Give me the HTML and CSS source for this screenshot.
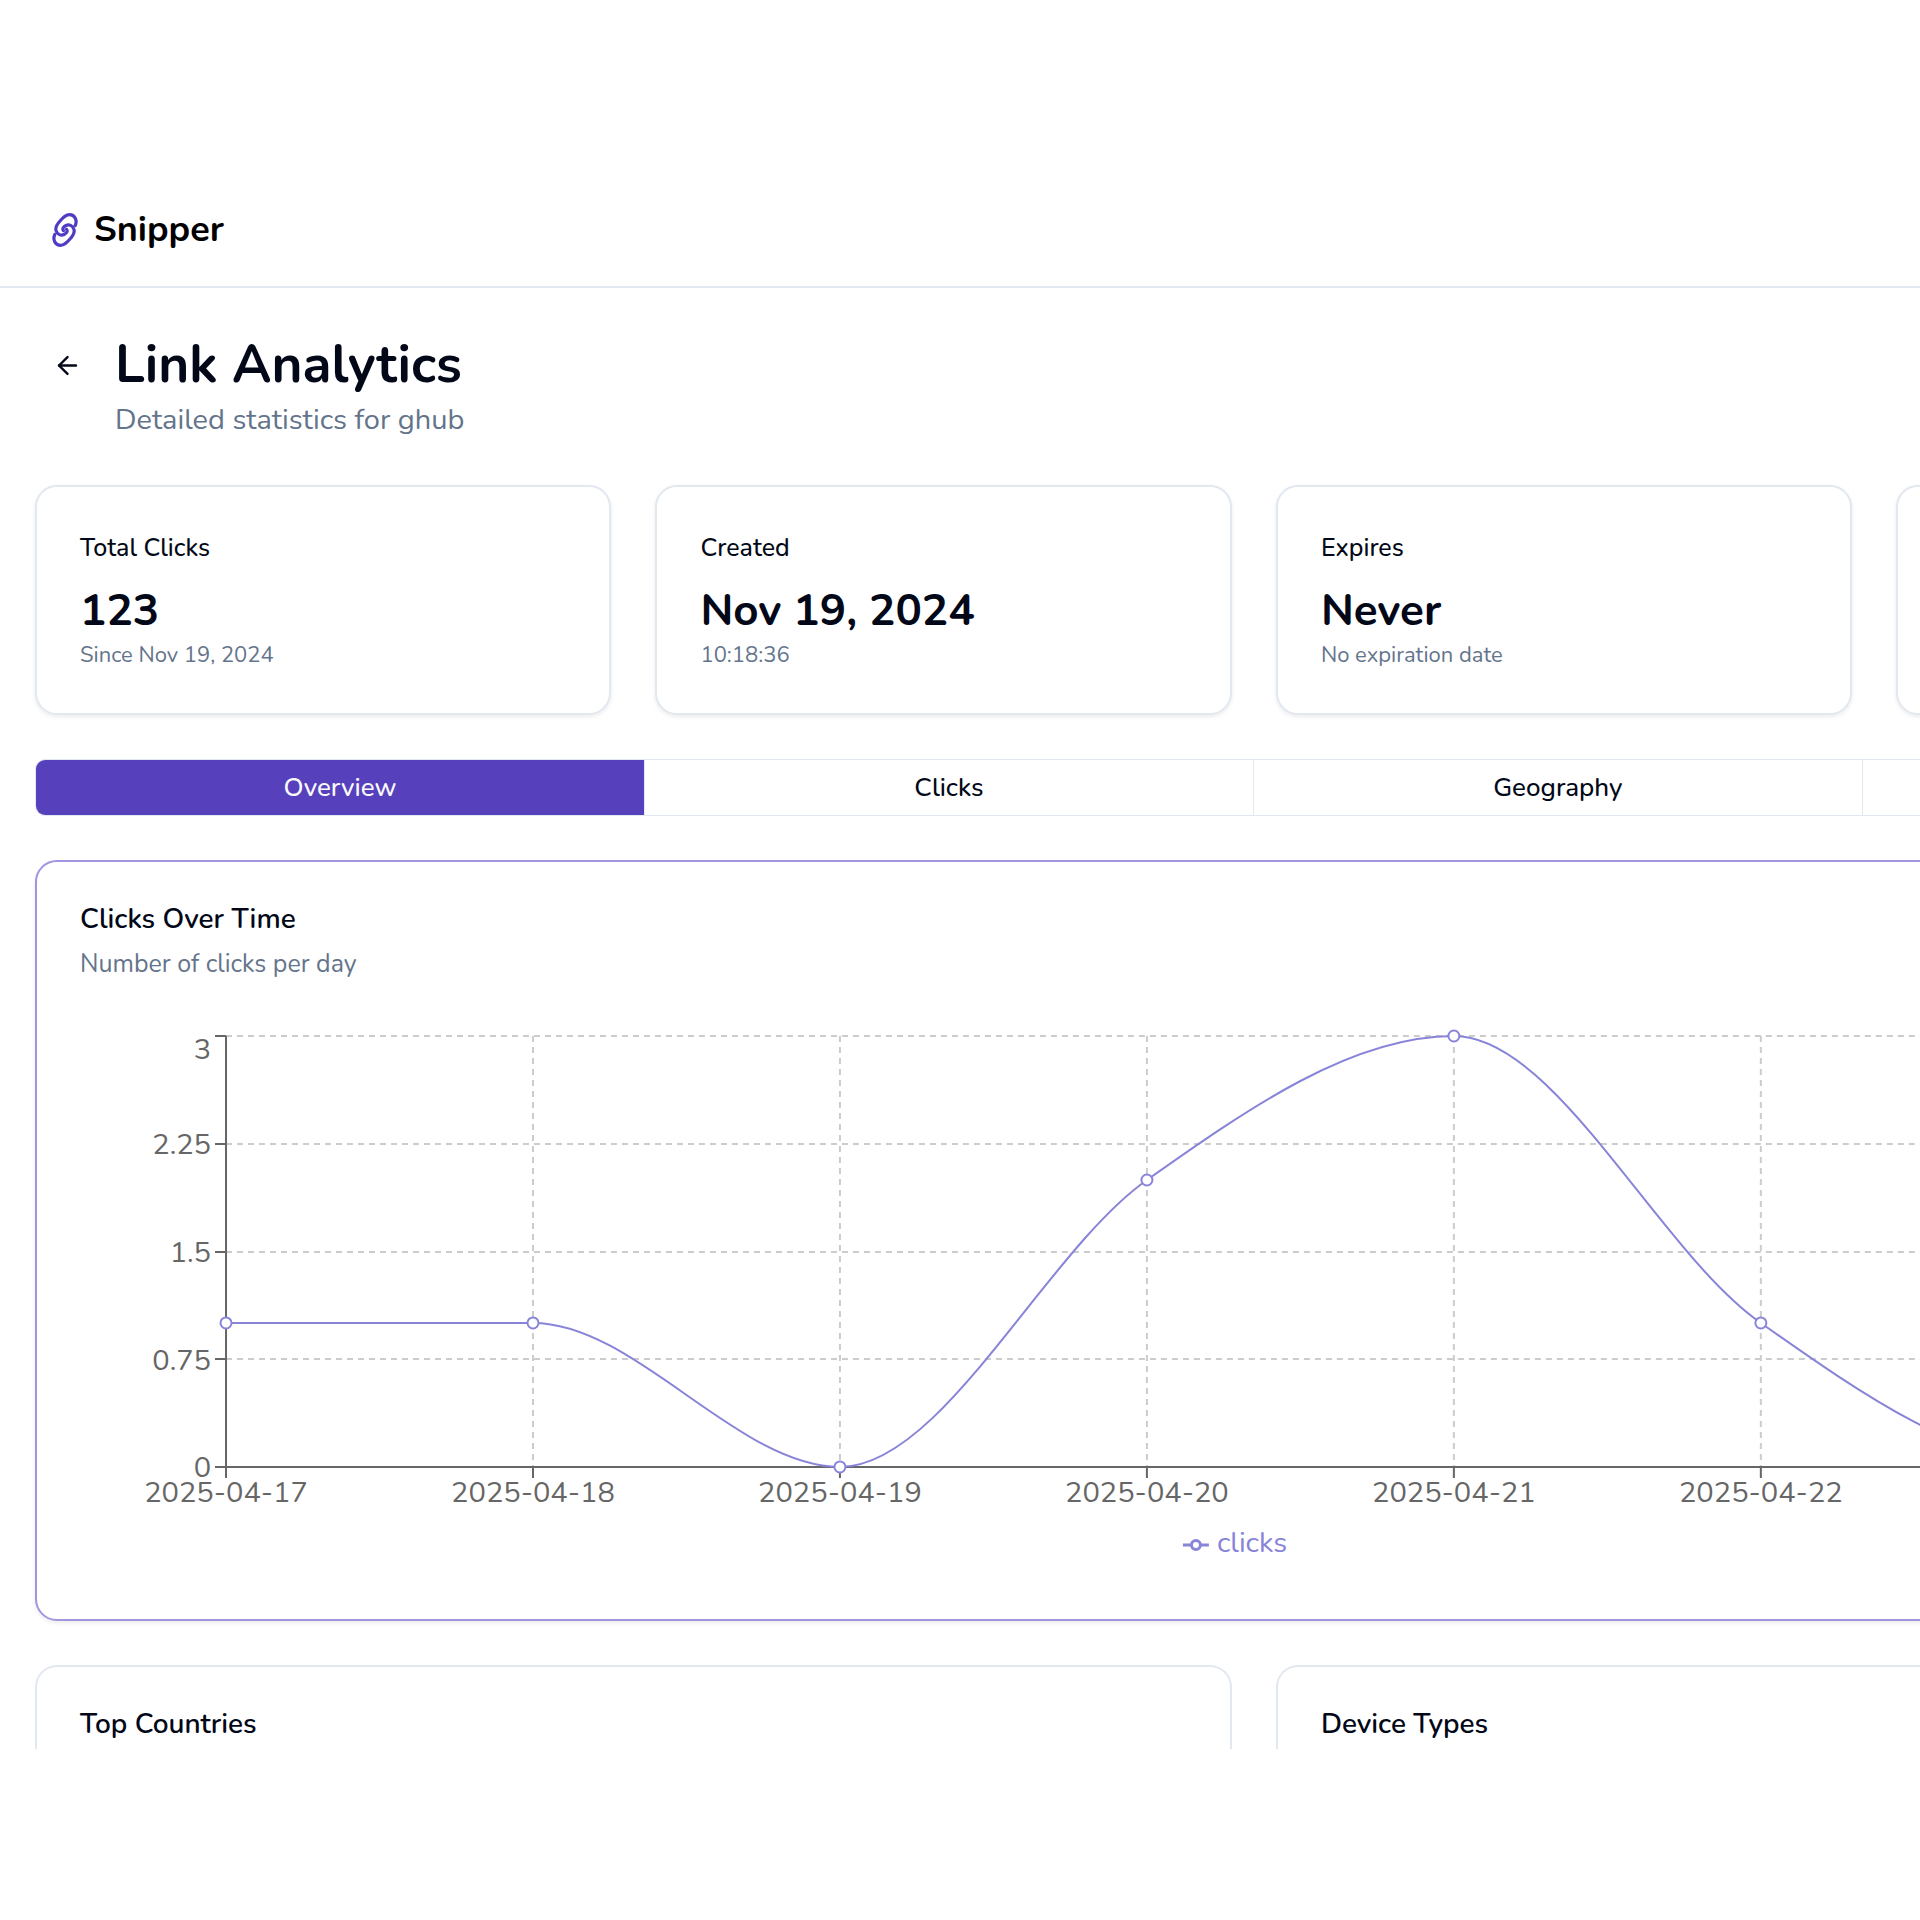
FILE: index.html
```html
<!DOCTYPE html>
<html lang="en">
<head>
<meta charset="utf-8">
<title>Snipper - Link Analytics</title>
<link rel="stylesheet" href="styles.css">
</head>
<body>
<header class="topbar">
  <a class="brand" href="#">
    <svg class="brand-icon" viewBox="0 0 26 34" fill="none" stroke="currentColor" stroke-width="3.2" stroke-linecap="round" aria-hidden="true">
      <path d="M23.2 12.5C25.5 7.5 23 1.7 17.5 1.7C13.5 1.7 11.5 4.2 8 8C4.5 11.8 2.8 14.5 4.2 18C5.4 21.5 9 23 12 21.5C14.5 20.3 16 18.4 14.6 16.4"/>
      <path d="M2.8 21.5C.5 26.5 3 32.3 8.5 32.3C12.5 32.3 14.5 29.8 18 26C21.5 22.2 23.2 19.5 21.8 16C20.6 12.500 17 11 14 12.500C11.500 13.700 10 15.600 11.400 17.600"/>
    </svg>
    <span>Snipper</span>
  </a>
</header>
<main class="page">
  <div class="content">
    <div class="heading">
      <button class="back" type="button" aria-label="Back">
        <svg viewBox="0 0 24 24" fill="none" stroke="currentColor" stroke-width="2" stroke-linecap="round" stroke-linejoin="round"><path d="m12 19-7-7 7-7"/><path d="M19 12H5"/></svg>
      </button>
      <div>
        <h1>Link Analytics</h1>
        <p class="subtitle">Detailed statistics for ghub</p>
      </div>
    </div>

    <section class="stats">
      <article class="card stat"><h2>Total Clicks</h2><p class="value">123</p><p class="note">Since Nov 19, 2024</p></article>
      <article class="card stat"><h2>Created</h2><p class="value">Nov 19, 2024</p><p class="note">10:18:36</p></article>
      <article class="card stat"><h2>Expires</h2><p class="value">Never</p><p class="note">No expiration date</p></article>
      <article class="card stat"></article>
    </section>

    <nav class="tabs">
      <button class="tab active" type="button">Overview</button>
      <button class="tab" type="button">Clicks</button>
      <button class="tab" type="button">Geography</button>
      <button class="tab" type="button" aria-label="More"></button>
    </nav>

    <section class="card chart-card">
      <h2 class="card-title">Clicks Over Time</h2>
      <p class="card-text">Number of clicks per day</p>
      <svg class="chart" viewBox="0 0 2348 550" role="img" aria-label="Clicks per day">
        <g class="grid">
          <path d="M146 10H2295M146 118H2295M146 226H2295M146 333H2295M146 441H2295"/>
          <path d="M146 10V441M453 10V441M760 10V441M1067 10V441M1374 10V441M1681 10V441M1988 10V441M2295 10V441"/>
        </g>
        <g class="axis">
          <path d="M146 10V441M146 441H2295"/>
          <path d="M135 10H146M135 118H146M135 226H146M135 333H146M135 441H146"/>
          <path d="M146 441V452M453 441V452M760 441V452M1067 441V452M1374 441V452M1681 441V452M1988 441V452"/>
        </g>
        <g class="label label-y">
          <text x="131" y="33">3</text><text x="131" y="128">2.25</text><text x="131" y="236">1.5</text><text x="131" y="344">0.75</text><text x="131" y="451">0</text>
        </g>
        <g class="label label-x">
          <text x="146" y="476">2025-04-17</text><text x="453" y="476">2025-04-18</text><text x="760" y="476">2025-04-19</text><text x="1067" y="476">2025-04-20</text><text x="1374" y="476">2025-04-21</text><text x="1681" y="476">2025-04-22</text>
        </g>
        <path class="line" d="M146 297H453C555 297 658 441 760 441C862 441 965 226 1067 154C1169 82 1272 10 1374 10C1476 10 1579 226 1681 297C1783 369 1886 441 1988 441H2295"/>
        <g class="dots">
          <circle cx="146" cy="297" r="5.5"/><circle cx="453" cy="297" r="5.5"/><circle cx="760" cy="441" r="5.5"/><circle cx="1067" cy="154" r="5.5"/><circle cx="1374" cy="10" r="5.5"/><circle cx="1681" cy="297" r="5.5"/>
        </g>
        <g class="legend">
          <path d="M1103 519H1111M1121 519H1129"/><circle cx="1116" cy="519" r="4.5"/>
          <text x="1137" y="526">clicks</text>
        </g>
      </svg>
    </section>

    <section class="details">
      <article class="card detail"><h2 class="card-title">Top Countries</h2></article>
      <article class="card detail"><h2 class="card-title">Device Types</h2></article>
    </section>
  </div>
</main>
</body>
</html>
```
FILE: styles.css
```css
* { box-sizing: border-box; }
body {
  margin: 0;
  padding-top: 172px;
  background: #fff;
  color: #020817;
  font-family: Nunito, "Nunito Sans", Lato, sans-serif;
}
h1, h2, p { margin: 0; }
button { font: inherit; color: inherit; border: 0; background: none; padding: 0; }

.topbar {
  display: flex;
  align-items: center;
  height: 116px;
  padding: 2px 52px 0;
  border-bottom: 2px solid #e2e8f0;
}
.brand {
  display: flex;
  align-items: center;
  gap: 16px;
  color: #000;
  font-size: 36px;
  line-height: 44px;
  font-weight: 700;
  text-decoration: none;
}
.brand-icon { width: 26px; height: 34px; color: #4f3cc4; }

.page { overflow: hidden; }
.content {
  display: flex;
  flex-direction: column;
  gap: 44px;
  width: 129%;
  padding: 44px 4px 0 35px;
}
.heading { display: flex; align-items: flex-start; gap: 16px; }
.back { display: flex; align-items: center; justify-content: center; width: 64px; height: 66px; }
.back svg { width: 29px; height: 29px; }
h1 { font-size: 53px; line-height: 66px; font-weight: 700; }
.subtitle { font-size: 29px; line-height: 43px; color: #64748b; }

.card {
  border: 2px solid #e2e8f0;
  border-radius: 22px;
  background: #fff;
  box-shadow: 0 2px 4px rgba(0, 0, 0, .08);
}
.stats { display: grid; grid-template-columns: repeat(4, 1fr); gap: 44px; }
.stat { padding: 44px 43px; }
.stat h2 { margin-bottom: 15px; font-size: 25px; line-height: 35px; font-weight: 500; }
.value { font-size: 44px; line-height: 60px; font-weight: 700; }
.note { font-size: 22px; line-height: 28px; color: #64748b; }

.tabs {
  display: grid;
  grid-template-columns: repeat(4, 1fr);
  border: 1px solid #e2e8f0;
  border-radius: 10px;
  overflow: hidden;
}
.tab { height: 55px; border-right: 1px solid #e2e8f0; font-size: 26px; font-weight: 500; }
.tab.active { background: #5740bb; color: #f8fafc; }

.chart-card { padding: 43px; border-color: #a096e0; }
.card-title { font-size: 28px; line-height: 29px; font-weight: 600; }
.card-text { margin-top: 12px; font-size: 25px; line-height: 37px; color: #64748b; }
.chart { display: block; width: 100%; height: auto; margin-top: 43px; overflow: visible; }
.grid path { fill: none; stroke: #ccc; stroke-width: 2; stroke-dasharray: 6 5; }
.axis path { fill: none; stroke: #666; stroke-width: 2; }
.label text { font-size: 29px; fill: #666; }
.label-y { text-anchor: end; }
.label-x { text-anchor: middle; }
.line { fill: none; stroke: #8884d8; stroke-width: 2; }
.dots circle { fill: #fff; stroke: #8884d8; stroke-width: 2; }
.legend path, .legend circle { fill: none; stroke: #8884d8; stroke-width: 3; }
.legend text { font-size: 29px; fill: #8884d8; }

.details { display: grid; grid-template-columns: 1fr 1fr; gap: 44px; }
.detail { padding: 43px 43px 10px; border-bottom: 0; border-radius: 22px 22px 0 0; box-shadow: none; }
```
